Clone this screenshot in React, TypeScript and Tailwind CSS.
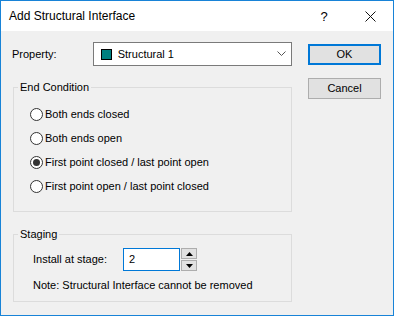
import React from "react";

const font = { fontFamily: '"Liberation Sans", Arial, sans-serif' };

function Radio({ label, checked }: { label: string; checked?: boolean }) {
  return (
    <div className="flex items-center h-[24px]">
      <div className="w-[13px] h-[13px] rounded-full border border-[#333333] bg-white flex items-center justify-center">
        {checked && <div className="w-[7px] h-[7px] rounded-full bg-[#333333]" />}
      </div>
      <span className="ml-[2px] text-[11px] text-black">{label}</span>
    </div>
  );
}

export default function App() {
  return (
    <div
      className="w-[394px] h-[316px] border border-[#1883d7] flex flex-col bg-[#f0f0f0] text-black leading-none"
      style={font}
    >
      <div className="h-[30px] bg-white flex items-center pl-[8px] pr-[0px] shrink-0">
        <span className="text-[12px] flex-1">Add Structural Interface</span>
        <span className="text-[13px] w-[46px] text-center">?</span>
        <span className="w-[46px] flex items-center justify-center">
          <svg width="11" height="11" viewBox="0 0 11 11">
            <path d="M0.5 0.5L10.5 10.5M10.5 0.5L0.5 10.5" stroke="#111" strokeWidth="1" />
          </svg>
        </span>
      </div>
      <div className="flex-1 flex">
        <div className="ml-[11px] w-[280px] flex flex-col">
          <div className="flex items-center mt-[11px] h-[24px]">
            <span className="text-[11px] w-[81px]">Property:</span>
            <div className="w-[200px] h-[24px] border border-[#7a7a7a] bg-white flex items-center pl-[7px] pr-[5px]">
              <div className="w-[11px] h-[11px] bg-[#008080] border border-black" />
              <span className="ml-[6px] text-[11px] flex-1">Structural 1</span>
              <svg width="9" height="6" viewBox="0 0 9 6">
                <path d="M0.5 0.5L4.5 4.5L8.5 0.5" stroke="#555" fill="none" strokeWidth="1" />
              </svg>
            </div>
          </div>
          <fieldset className="mt-[14px] ml-[1px] w-[279px] h-[132px] border border-[#dcdcdc] pl-[16px]">
            <legend className="-ml-[12px] px-[2px] text-[11px] leading-[14px]">End Condition</legend>
            <div className="flex flex-col mt-[8px]">
              <Radio label="Both ends closed" />
              <Radio label="Both ends open" />
              <Radio label="First point closed / last point open" checked />
              <Radio label="First point open / last point closed" />
            </div>
          </fieldset>
          <fieldset className="mt-[15px] ml-[1px] w-[279px] h-[75px] border border-[#dcdcdc] pl-[19px]">
            <legend className="-ml-[15px] px-[2px] text-[11px] leading-[14px]">Staging</legend>
            <div className="flex items-center mt-[7px]">
              <span className="text-[11px] w-[90px]">Install at stage:</span>
              <div className="w-[57px] h-[23px] border border-[#0078d7] bg-white flex items-center pl-[5px] text-[11px]">2</div>
              <div className="flex flex-col h-[23px] justify-between ml-[1px]">
                <div className="w-[16px] h-[11px] border border-[#adadad] bg-[#e1e1e1] flex items-center justify-center">
                  <svg width="7" height="4" viewBox="0 0 7 4"><path d="M0 4L3.5 0L7 4Z" fill="#000" /></svg>
                </div>
                <div className="w-[16px] h-[11px] border border-[#adadad] bg-[#e1e1e1] flex items-center justify-center">
                  <svg width="7" height="4" viewBox="0 0 7 4"><path d="M0 0L3.5 4L7 0Z" fill="#000" /></svg>
                </div>
              </div>
            </div>
            <div className="text-[11px] mt-[9px]">Note: Structural Interface cannot be removed</div>
          </fieldset>
        </div>
        <div className="ml-[16px] flex flex-col mt-[13px]">
          <button className="w-[73px] h-[21px] border-2 border-[#0078d7] bg-[#e1e1e1] text-[11px] flex items-center justify-center">OK</button>
          <button className="mt-[13px] w-[73px] h-[21px] border border-[#adadad] bg-[#e1e1e1] text-[11px] flex items-center justify-center">Cancel</button>
        </div>
      </div>
    </div>
  );
}
